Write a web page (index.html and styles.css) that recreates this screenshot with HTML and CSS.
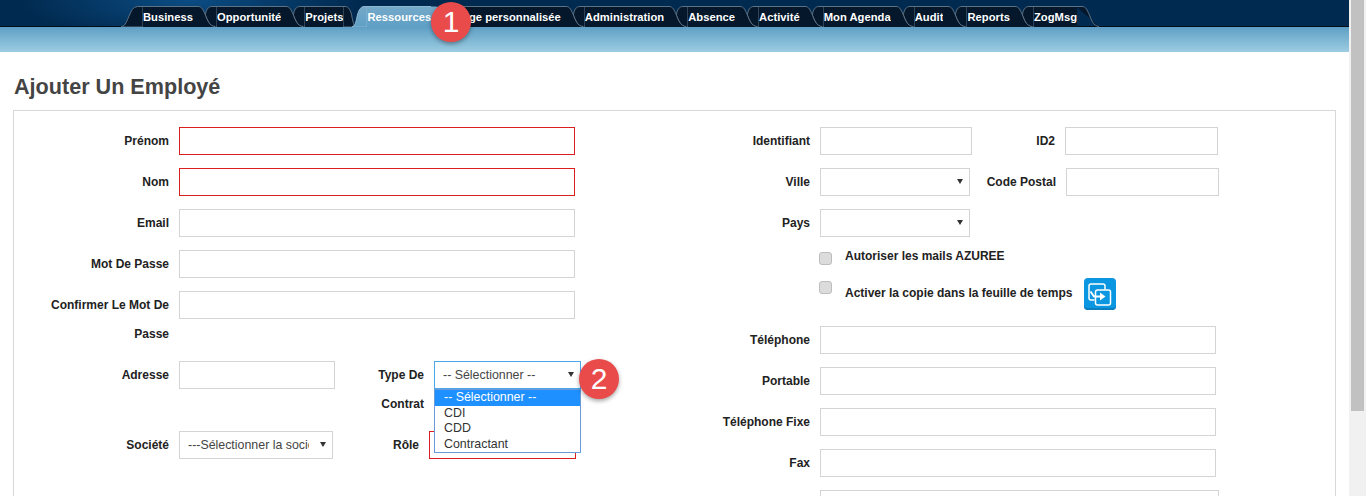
FILE: index.html
```html
<!DOCTYPE html>
<html lang="fr">
<head>
<meta charset="utf-8">
<title>Ajouter Un Employé</title>
<link rel="stylesheet" href="styles.css">
</head>
<body>
<svg class="defs" width="0" height="0" aria-hidden="true">
  <defs>
    <linearGradient id="activeFill" x1="0" y1="0" x2="0" y2="1">
      <stop offset="0" stop-color="#74a9c9"/>
      <stop offset="1" stop-color="#5f9fc5"/>
    </linearGradient>
    <symbol id="capStart" viewBox="0 0 22 21">
      <path d="M0 21C5 20 6 14 9 8C11 3 13 .5 18 .5H22V21Z" fill="#04172b" stroke="#5d7284"/>
    </symbol>
    <symbol id="capEnd" viewBox="0 0 24 21">
      <path d="M-1 .5H5C9 .5 10 4 12 8C14 13 16 20 22 20.5" fill="#04172b" stroke="#5d7284"/>
    </symbol>
    <symbol id="joint" viewBox="0 0 24 21">
      <path d="M24 .5H19C15 .5 13 4 12.400 9C14 13 16 20 22 21H24Z" fill="#04172b" stroke="#5d7284"/>
      <path d="M0 .5H5C9 .5 10 4 12 8C14 13 16 20 22 20.500V21H0Z" fill="#04172b"/>
      <path d="M0 .5H5C9 .5 10 4 12 8C14 13 16 20 22 20.500" fill="none" stroke="#5d7284"/>
    </symbol>
    <symbol id="jointIn" viewBox="0 0 24 21">
      <path d="M0 .5H2C6 .5 8 5 9 11C10 16 11 20 12 21H0Z" fill="#04172b" stroke="#5d7284"/>
      <path d="M24 .5H21C17 .5 15 6 14 11C13 16 12 20 9 21H24Z" fill="url(#activeFill)" stroke="#8fb6cf"/>
    </symbol>
    <symbol id="jointOut" viewBox="0 0 24 21">
      <path d="M24 .5H19C15 .5 13 4 12.400 9C14 13 16 20 22 21H24Z" fill="#04172b" stroke="#5d7284"/>
      <path d="M0 .5H5C9 .5 10 4 12 8C14 13 16 20 22 21H0Z" fill="url(#activeFill)"/>
    </symbol>
  </defs>
</svg>

<div class="window">
  <div class="page">
    <header class="header">
      <nav class="topbar">
        <ul class="tabs">
          <li class="cap"><svg width="22" height="21"><use href="#capStart"/></svg></li>
          <li class="tab">Business</li>
          <li class="joint"><svg width="24" height="21"><use href="#joint"/></svg></li>
          <li class="tab">Opportunité</li>
          <li class="joint"><svg width="24" height="21"><use href="#joint"/></svg></li>
          <li class="tab">Projets</li>
          <li class="joint"><svg width="24" height="21"><use href="#jointIn"/></svg></li>
          <li class="tab tab-active">Ressources</li>
          <li class="joint"><svg width="24" height="21"><use href="#jointOut"/></svg></li>
          <li class="tab">Page personnalisée</li>
          <li class="joint"><svg width="24" height="21"><use href="#joint"/></svg></li>
          <li class="tab">Administration</li>
          <li class="joint"><svg width="24" height="21"><use href="#joint"/></svg></li>
          <li class="tab">Absence</li>
          <li class="joint"><svg width="24" height="21"><use href="#joint"/></svg></li>
          <li class="tab">Activité</li>
          <li class="joint"><svg width="24" height="21"><use href="#joint"/></svg></li>
          <li class="tab">Mon Agenda</li>
          <li class="joint"><svg width="24" height="21"><use href="#joint"/></svg></li>
          <li class="tab">Audit</li>
          <li class="joint"><svg width="24" height="21"><use href="#joint"/></svg></li>
          <li class="tab">Reports</li>
          <li class="joint"><svg width="24" height="21"><use href="#joint"/></svg></li>
          <li class="tab">ZogMsg</li>
          <li class="joint"><svg width="24" height="21"><use href="#capEnd"/></svg></li>
        </ul>
      </nav>
      <div class="subbar"></div>
      <span class="badge badge-one">1</span>
    </header>

    <h1 class="title">Ajouter Un Employé</h1>

    <form class="panel">
      <div class="col col-left">
        <div class="row"><label class="lbl lbl-main">Prénom</label><input class="field field-wide field-error" type="text"></div>
        <div class="row"><label class="lbl lbl-main">Nom</label><input class="field field-wide field-error" type="text"></div>
        <div class="row"><label class="lbl lbl-main">Email</label><input class="field field-wide" type="text"></div>
        <div class="row"><label class="lbl lbl-main">Mot De Passe</label><input class="field field-wide" type="text"></div>
        <div class="row row-tall"><label class="lbl lbl-main lbl-wrap lbl-confirm">Confirmer Le Mot De Passe</label><input class="field field-wide" type="text"></div>
        <div class="row row-tall">
          <label class="lbl lbl-main">Adresse</label>
          <input class="field field-address" type="text">
          <label class="lbl lbl-wrap lbl-type">Type De Contrat</label>
          <div class="select select-open">
            <span class="select-text">-- Sélectionner --</span>
            <ul class="dropdown">
              <li class="dropdown-item dropdown-item-on">-- Sélectionner --</li>
              <li class="dropdown-item">CDI</li>
              <li class="dropdown-item">CDD</li>
              <li class="dropdown-item">Contractant</li>
            </ul>
            <span class="badge badge-two">2</span>
          </div>
        </div>
        <div class="row">
          <label class="lbl lbl-main">Société</label>
          <div class="select select-company"><span class="select-text">---Sélectionner la société---</span></div>
          <label class="lbl lbl-role">Rôle</label>
          <input class="field field-role field-error" type="text">
        </div>
      </div>

      <div class="col col-right">
        <div class="row">
          <label class="lbl lbl-side">Identifiant</label>
          <input class="field field-id" type="text">
          <label class="lbl lbl-id2">ID2</label>
          <input class="field field-short" type="text">
        </div>
        <div class="row">
          <label class="lbl lbl-side">Ville</label>
          <div class="select select-city"></div>
          <label class="lbl lbl-zip">Code Postal</label>
          <input class="field field-short" type="text">
        </div>
        <div class="row row-pays">
          <label class="lbl lbl-side">Pays</label>
          <div class="select select-city"></div>
        </div>
        <div class="check-row">
          <input class="check" type="checkbox">
          <span class="check-text">Autoriser les mails AZUREE</span>
        </div>
        <div class="check-row check-row-copy">
          <input class="check" type="checkbox">
          <span class="check-text">Activer la copie dans la feuille de temps</span>
          <button class="copy-btn" type="button" aria-label="Copier">
            <svg width="32" height="32" viewBox="0 0 32 32" fill="none" stroke="#fff" stroke-width="1.500">
              <path d="M10.500 22H7A2 2 0 0 1 5 20V8A2 2 0 0 1 7 6H19A2 2 0 0 1 21 8V11.500"/>
              <rect x="11.500" y="12" width="15" height="15" rx="2"/>
              <path d="M6.500 13.500L10 18.500H16" stroke-width="2"/>
              <path d="M16 14.500L21.500 18.500L16 22.500Z" fill="#fff" stroke="none"/>
            </svg>
          </button>
        </div>
        <div class="row"><label class="lbl lbl-side">Téléphone</label><input class="field field-phone" type="text"></div>
        <div class="row"><label class="lbl lbl-side">Portable</label><input class="field field-phone" type="text"></div>
        <div class="row"><label class="lbl lbl-side">Téléphone Fixe</label><input class="field field-phone" type="text"></div>
        <div class="row"><label class="lbl lbl-side">Fax</label><input class="field field-phone" type="text"></div>
        <div class="row"><label class="lbl lbl-side"></label><input class="field field-last" type="text"></div>
      </div>
    </form>
  </div>

  <div class="scrollbar"><div class="scrollbar-thumb"></div></div>
</div>
</body>
</html>
```

FILE: styles.css
```css
* {margin:0; padding:0; box-sizing:border-box;}
html, body {height:100%; overflow:hidden;}
body {font-family:"Liberation Sans", Arial, sans-serif; font-size:12px; color:#222; background:#fff;}
.defs {position:absolute;}

.window {display:flex; height:496px; overflow:hidden;}
.page {flex:1; min-width:0; position:relative;}

/* header */
.topbar {
	height:27px; padding:6px 0 0 121px;
	background:radial-gradient(ellipse 170px 40px at 190px 0, #0b4c83, rgba(11,76,131,0) 100%), #012a50;
	border-bottom:1px solid #020d18;
}
.tabs {display:flex; height:21px; list-style:none;}
.cap, .joint {height:21px; flex:none;}
.cap svg, .joint svg {display:block;}
.tab {
	height:21px; line-height:21px; flex:none;
	font-size:11.2px; letter-spacing:.03px; font-weight:bold; color:#fff; white-space:nowrap;
	background:#04172b; border-top:1px solid #5d7284;
}
.tab-active {background:linear-gradient(#74a9c9, #5f9fc5); border-top-color:#8fb6cf;}
.subbar {height:25px; background:linear-gradient(#5f9fc5, #9ccde2);}

.badge {
	position:absolute; width:40px; height:40px; border-radius:50%;
	background:#e94b4b; color:#fff; box-shadow:0 2px 4px rgba(0,0,0,.35);
	font-size:30px; line-height:40px; text-align:center; z-index:5;
}
.badge-one {left:431px; top:2px;}
.badge-two {left:144px; top:-3px;}

.title {margin:22px 0 10px 14px; font-size:21.6px; line-height:26px; font-weight:bold; color:#444;}

/* form */
.panel {display:flex; height:600px; margin:0 13px; padding-top:16px; border:1px solid #d8d8d8;}
.col-left {width:686px; flex:none;}
.col {display:flex; flex-direction:column; gap:13px;}
.row {display:flex; gap:10px; height:28px; flex:none;}
.row-tall {height:58px; margin-bottom:-1px;}

.lbl {display:block; flex:none; font-weight:bold; font-size:12px; line-height:28px; text-align:right; color:#222;}
.lbl-wrap {line-height:29px;}
.lbl-confirm {padding-left:20px;}
.lbl-main {width:155px;}
.lbl-type {width:79px;}
.lbl-role {width:76px;}
.lbl-side {width:110px;}
.lbl-id2 {width:73px;}
.lbl-zip {width:76px;}

.field {display:block; height:28px; flex:none; border:1px solid #d4d4d4; background:#fff; outline:none;}
.field-error {border-color:#d9201f;}
.field-wide {width:396px;}
.field-address {width:156px;}
.field-role {width:147px;}
.field-id {width:152px;}
.field-short {width:153px;}
.field-phone {width:396px;}
.field-last {width:399px;}

.select {position:relative; flex:none; height:28px; padding-left:8px; border:1px solid #d4d4d4; background:#fff; font-size:12.4px; line-height:26px; color:#444;}
.select::after {
	content:""; position:absolute; right:6px; top:10px;
	border:3px solid transparent; border-top:5px solid #333; border-bottom:0;
}
.select-text {display:block; overflow:hidden; white-space:nowrap;}
.select-open {width:147px; border-color:#4ea6ea;}
.select-company {width:154px;}
.select-company .select-text {width:121px;}
.select-city {width:150px;}

.dropdown {
	position:absolute; left:-1px; top:27px; width:147px; height:64px;
	border:1px solid #6a9bd8; background:#fff; list-style:none; z-index:4;
}
.dropdown-item {height:15.5px; line-height:14px; padding-left:9px; color:#333;}
.dropdown-item-on {line-height:15px; background:#1e90ff; color:#fff;}

.check-row {display:flex; align-items:flex-start; margin:2px 0 0 119px; height:13px; flex:none;}
.check-row-copy {height:32px; margin:0 0 3px 119px;}
.check {
	appearance:none; -webkit-appearance:none; flex:none;
	width:13px; height:13px; border:1px solid #bdbdbd; border-radius:3px; background:#dcdcdc;
}
.check-row-copy .check {margin-top:3px;}
.check-text {margin-left:13px; font-weight:bold; font-size:12px; line-height:9px;}
.check-row-copy .check-text {line-height:30px;}
.copy-btn {
	width:32px; height:32px; margin-left:12px; flex:none; border:0; border-radius:4px;
	background:#0a96e0; box-shadow:inset 0 -2px 0 #0b7fc0;
}
.copy-btn svg {display:block;}

/* scrollbar */
.scrollbar {width:17px; flex:none; background:#f1f1f1; padding-left:2px;}
.scrollbar-thumb {width:13px; height:411px; background:#c1c1c1;}
```
